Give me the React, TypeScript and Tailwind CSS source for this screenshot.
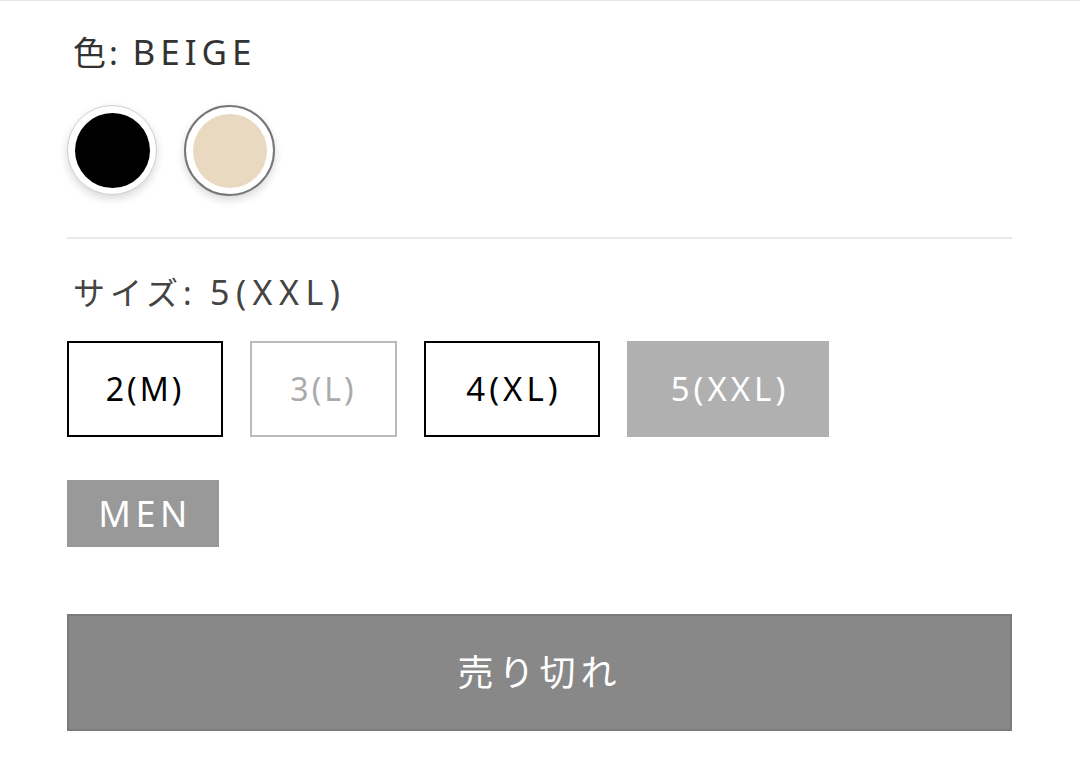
import React from "react";

const font = { fontFamily: '"Noto Sans", "Noto Sans CJK JP", sans-serif' };

export default function App() {
  return (
    <div className="w-[1080px] h-[779px] bg-white border-t border-[#e6e6e6] overflow-hidden" style={font}>
      <div className="pl-[67px] pr-[68px]">
        <div className="mt-[31px] h-[40px] pl-[6px] text-[33px] leading-[40px] text-[#333]">
          <span className="tracking-[3px]">色: </span>
          <span className="text-[35px] leading-[40px] tracking-[5px]">BEIGE</span>
        </div>
        <div className="mt-[33px] flex gap-[27px]">
          <div className="w-[90px] h-[90px] rounded-full bg-white border-[1.5px] border-[#cfcfcf] shadow-[0_4px_8px_rgba(0,0,0,0.15)] flex items-center justify-center">
            <div className="w-[75px] h-[75px] rounded-full bg-black" />
          </div>
          <div className="w-[91px] h-[91px] rounded-full bg-white border-2 border-[#777] shadow-[0_4px_8px_rgba(0,0,0,0.15)] flex items-center justify-center">
            <div className="w-[74px] h-[74px] rounded-full bg-[#e8d9c0]" />
          </div>
        </div>
        <div className="mt-[41px] h-[2px] bg-[#e8e8e8]" />
        <div className="mt-[33px] h-[40px] pl-[6px] text-[32px] leading-[40px] text-[#444]">
          <span className="tracking-[5px]">サイズ: </span>
          <span className="text-[34px] leading-[40px] tracking-[6.5px]">5(XXL)</span>
        </div>
        <div className="mt-[29px] flex gap-[27px]">
          <div className="w-[156px] h-[96px] border-2 border-black flex items-center justify-center text-[32px] text-black tracking-[3px]">2(M)</div>
          <div className="w-[147px] h-[96px] border-2 border-[#bbb] flex items-center justify-center text-[32px] text-[#aaa] tracking-[3px]">3(L)</div>
          <div className="w-[176px] h-[96px] border-2 border-black flex items-center justify-center text-[33px] text-black tracking-[4px] pl-[4px]">4(XL)</div>
          <div className="w-[202px] h-[96px] bg-[#b0b0b0] flex items-center justify-center text-[33px] text-white tracking-[4px] pl-[4px]">5(XXL)</div>
        </div>
        <div className="mt-[43px] flex">
          <div className="w-[152px] h-[67px] bg-[#999] flex items-center justify-center text-[36px] text-white tracking-[4.5px] pl-[4px]">MEN</div>
        </div>
        <div className="mt-[67px] h-[117px] bg-[#888] border-2 border-[#7b7b7b] flex items-center justify-center text-[36px] text-white tracking-[5px]">
          売り切れ
        </div>
      </div>
    </div>
  );
}
